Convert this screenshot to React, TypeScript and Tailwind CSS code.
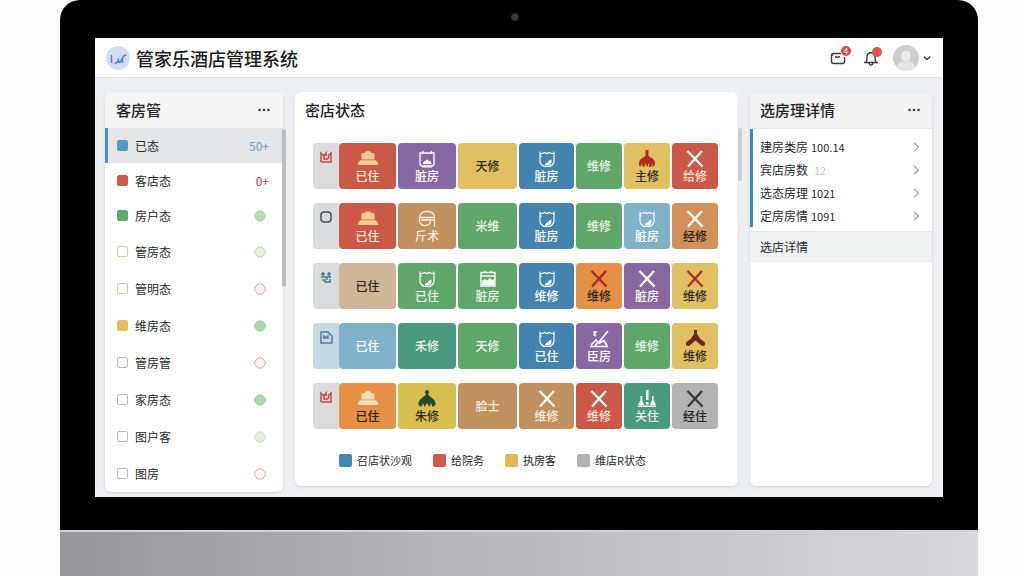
import React, { useState } from 'react';

type IconName = 'bed' | 'cup' | 'box' | 'linen' | 'basket' | 'cross' | 'pump' | 'roof' | 'tree' | 'broom' | 'tools';

interface Tile {
  label: string;
  bg: string;
  text: string;
  icon?: IconName;
  iconColor?: string;
}

interface RoomRow {
  lead: React.ReactNode;
  leadBg: string;
  tiles: Tile[];
}

const icons: Record<IconName, React.ReactNode> = {
  bed: (
    <>
      <path
        fill="currentColor"
        d="M5.500 9.500V4.500Q5.500 3 7 3h1.500Q9.500 1 12 1t3.500 2H17q1.500 0 1.500 1.500v5z"
      />
      <path fill="currentColor" d="M4.500 10.300h15q2.500 1 3 4.700h-21q.5-3.700 3-4.700z" />
    </>
  ),
  cup: (
    <>
      <path fill="none" stroke="currentColor" strokeWidth="1.200" d="M5 1.500V11q0 3 4 5.500h6q4-2.500 4-5.500V1.500M4.500 3.500h3l2-1 2.500 1 2.500-1 2 1h3M5 6h2" />
      <path fill="currentColor" d="M9.500 15.500q1-3 3.500-3.500 1-2 3.500-2.500.5 4-2.500 6z" />
    </>
  ),
  box: (
    <>
      <path fill="none" stroke="currentColor" strokeWidth="1.300" d="M5 3h14v10.500q0 2.500-2.500 2.500h-9Q5 16 5 13.500zM8 1v3M16.500 1v3M7 16.800h10" />
      <path fill="currentColor" d="M8 14q0-3 2.500-3 1.500-3 3.500 0 2.500 0 2.500 3z" />
    </>
  ),
  linen: (
    <path fill="none" stroke="currentColor" strokeWidth="1.300" d="M4.500 8q0-6.500 7.500-6.500T19.500 8v9M4.500 8v3q1 5 6 4.500 5-.5 5-4.500M4.500 7.500h15M6 10h13.500" />
  ),
  basket: (
    <>
      <path fill="none" stroke="currentColor" strokeWidth="1.400" d="M5 2.500h14V16H5zM5 6h14M9 1v2M15 1v2" />
      <path fill="currentColor" d="M6 15V11l3-2 2 1.500L14 8l2 2 2-1v6z" />
    </>
  ),
  cross: <path fill="none" stroke="currentColor" strokeWidth="2.300" d="M4.500 1 19.500 16.500M19 1 5 16.500" />,
  pump: (
    <path
      fill="currentColor"
      d="M10.500 0h3v6l4 2.500q3 2 2.500 6.500l-2.500 2v-4l-1.500 4h-2v-4l-2 4-2-4-.5 4-2-.5-.5-3-1.500 3-1.500-1q-.5-5 2.500-7l4-2.500z"
    />
  ),
  roof: <path fill="currentColor" d="M11 0h3v4l3 4.500 5 4v3l-3 .5-6.500-5.500L6 16l-3-.5v-3l5-4L11 4z" />,
  tree: (
    <path
      fill="currentColor"
      d="M12 0q2 0 2 2t-1.200 2.500l4.200 3.500q4 3 3.500 7L17.500 17l-1.500-4-1.500 4-2.500-4-2.500 4-1.500-4-1.500 4L3.500 15Q3 11 7 8l4.200-3.500Q10 4 10 2t2-2z"
    />
  ),
  broom: (
    <path fill="none" stroke="currentColor" strokeWidth="1.600" d="M21 1 12 12M3 16.500h18M4 15l5-5 3 3.500 5-3 3 5M6 2h3L7 4.500l2 1.500M8 16l2-3" />
  ),
  tools: (
    <path fill="currentColor" d="M11 0h2.500v10H11zM11 12h2.500v2.500H11zM5.500 6h1.600v4l2 5H3l2.500-5zM17 6h1.600v4l2.400 5h-6l2-5zM3 15.500h18V17H3z" />
  ),
};

const TileIcon: React.FC<{ name: IconName; color?: string }> = ({ name, color = 'text-white' }) => (
  <svg viewBox="0 0 24 18" className={`h-[18px] w-6 shrink-0 ${color}`} aria-hidden="true">
    {icons[name]}
  </svg>
);

const RED = 'bg-[#cc5847]';
const PURPLE = 'bg-[#8768a3]';
const YELLOW = 'bg-[#e0c062]';
const BLUE = 'bg-[#4284ae]';
const GREEN = 'bg-[#5fa768]';
const SKY = 'bg-[#7fb1c8]';
const BROWN = 'bg-[#c1905f]';
const ORANGE = 'bg-[#e59045]';
const TEAL = 'bg-[#4a9a80]';

const leadPaths = {
  crown: <path d="M2 12h10V3L9.500 5.500V9M2 12V3l3 3v3h4M5 6l2-3v3" />,
  square: <rect x="2" y="2" width="10" height="10" rx="3" />,
  grid: <path d="M2 4h4M8 4h4M4 2v4M10 2v4M2 7h10M3 10h3v2h5v-3M8 7v3" />,
  file: <path d="M2 2h7l4 4v7H2zM5 9V6l2 2 2-2v3" />,
};

const lead = (shape: keyof typeof leadPaths, color: string) => (
  <svg viewBox="0 0 14 14" className={`size-[14px] ${color}`} fill="none" stroke="currentColor" strokeWidth="1.500" aria-hidden="true">
    {leadPaths[shape]}
  </svg>
);

const rows: RoomRow[] = [
  {
    lead: lead('crown', 'text-[#c0493b]'),
    leadBg: 'bg-[#d9dbdc]',
    tiles: [
      { label: '已住', bg: RED, text: 'text-[#ffe9dc]', icon: 'bed', iconColor: 'text-[#fbcb93]' },
      { label: '脏房', bg: PURPLE, text: 'text-white', icon: 'box' },
      { label: '天修', bg: YELLOW, text: 'text-[#2b2a1c]' },
      { label: '脏房', bg: BLUE, text: 'text-white', icon: 'cup' },
      { label: '维修', bg: GREEN, text: 'text-[#e9f6e6]' },
      { label: '主修', bg: YELLOW, text: 'text-[#2b2a1c]', icon: 'pump', iconColor: 'text-[#b52a20]' },
      { label: '给修', bg: RED, text: 'text-[#ffe1da]', icon: 'cross' },
    ],
  },
  {
    lead: lead('square', 'text-[#4b5054]'),
    leadBg: 'bg-[#d9dbdc]',
    tiles: [
      { label: '已住', bg: RED, text: 'text-[#ffe9dc]', icon: 'bed', iconColor: 'text-[#fbcb93]' },
      { label: '斤术', bg: BROWN, text: 'text-[#fbeedd]', icon: 'linen', iconColor: 'text-[#fbeedd]' },
      { label: '米维', bg: GREEN, text: 'text-[#e9f6e6]' },
      { label: '脏房', bg: BLUE, text: 'text-white', icon: 'cup' },
      { label: '维修', bg: GREEN, text: 'text-[#e9f6e6]' },
      { label: '脏房', bg: SKY, text: 'text-white', icon: 'cup' },
      { label: '经修', bg: 'bg-[#d0925a]', text: 'text-[#2b2118]', icon: 'cross' },
    ],
  },
  {
    lead: lead('grid', 'text-[#3f7f86]'),
    leadBg: 'bg-[#d9dbdc]',
    tiles: [
      { label: '已住', bg: 'bg-[#cdb797]', text: 'text-[#2e261d]' },
      { label: '已住', bg: GREEN, text: 'text-[#e9f6e6]', icon: 'cup' },
      { label: '脏房', bg: GREEN, text: 'text-[#e9f6e6]', icon: 'basket' },
      { label: '维修', bg: BLUE, text: 'text-white', icon: 'cup' },
      { label: '维修', bg: ORANGE, text: 'text-[#2b2118]', icon: 'cross', iconColor: 'text-[#a8261c]' },
      { label: '脏房', bg: PURPLE, text: 'text-white', icon: 'cross' },
      { label: '维修', bg: YELLOW, text: 'text-[#2b2a1c]', icon: 'cross', iconColor: 'text-[#b52a20]' },
    ],
  },
  {
    lead: lead('file', 'text-[#4f7e97]'),
    leadBg: 'bg-[#c5dae5]',
    tiles: [
      { label: '已住', bg: SKY, text: 'text-white' },
      { label: '禾修', bg: TEAL, text: 'text-[#e9f6e6]' },
      { label: '天修', bg: GREEN, text: 'text-[#e9f6e6]' },
      { label: '已住', bg: BLUE, text: 'text-white', icon: 'cup' },
      { label: '臣房', bg: PURPLE, text: 'text-white', icon: 'broom' },
      { label: '维修', bg: GREEN, text: 'text-[#e9f6e6]' },
      { label: '维修', bg: YELLOW, text: 'text-[#2b2a1c]', icon: 'roof', iconColor: 'text-[#6e2417]' },
    ],
  },
  {
    lead: lead('crown', 'text-[#c0493b]'),
    leadBg: 'bg-[#d9dbdc]',
    tiles: [
      { label: '已住', bg: ORANGE, text: 'text-[#2b2118]', icon: 'bed', iconColor: 'text-[#ffdfb5]' },
      { label: '朱修', bg: 'bg-[#d9bf50]', text: 'text-[#2b2a1c]', icon: 'tree', iconColor: 'text-[#1f4a26]' },
      { label: '脸士', bg: BROWN, text: 'text-[#fbeedd]' },
      { label: '维修', bg: BROWN, text: 'text-[#fbeedd]', icon: 'cross' },
      { label: '维修', bg: RED, text: 'text-[#ffe1da]', icon: 'cross' },
      { label: '关住', bg: TEAL, text: 'text-[#e9f6e6]', icon: 'tools' },
      { label: '经住', bg: 'bg-[#b3b3b3]', text: 'text-[#222222]', icon: 'cross', iconColor: 'text-[#33373a]' },
    ],
  },
];

const sideItems = [
  { label: '已态', box: 'bg-[#559ac2] border-[#559ac2]', count: '50+', countColor: 'text-[#5a9fca]' },
  { label: '客店态', box: 'bg-[#d25a49] border-[#d25a49]', count: '0+', countColor: 'text-[#c8372c]' },
  { label: '房户态', box: 'bg-[#5ea869] border-[#5ea869]', dot: 'fill-[#b5dfb4] stroke-[#a3d3a4]' },
  { label: '管房态', box: 'border-[#c5cfa6]', dot: 'fill-[#dff0dd] stroke-[#bcd6bb]' },
  { label: '管明态', box: 'border-[#cdc7ac]', dot: 'fill-[#fbf1f0] stroke-[#d9a3a1]' },
  { label: '维房态', box: 'bg-[#e7bd62] border-[#e7bd62]', dot: 'fill-[#a4dba8] stroke-[#98cf9d]' },
  { label: '管房管', box: 'border-[#b6babd]', dot: 'fill-[#faf0ee] stroke-[#dba9a7]' },
  { label: '家房态', box: 'border-[#b6babd]', dot: 'fill-[#a4dba8] stroke-[#98cf9d]' },
  { label: '图户客', box: 'border-[#b6babd]', dot: 'fill-[#e6f1e4] stroke-[#c5dac4]' },
  { label: '图房', box: 'border-[#b6babd]', dot: 'fill-[#fdf6f6] stroke-[#d9a3a1]' },
];

const details = [
  { label: '建房类房', value: '100.14', muted: false },
  { label: '宾店房数', value: '12', muted: true },
  { label: '选态房理', value: '1021', muted: false },
  { label: '定房房情', value: '1091', muted: false },
];

const legend = [
  { label: '召店状沙观', color: 'bg-[#4389b2]' },
  { label: '给院务', color: 'bg-[#cf5c4a]' },
  { label: '执房客', color: 'bg-[#dcba55]' },
  { label: '维店R状态', color: 'bg-[#b3b3b3]' },
];

const MoreButton: React.FC = () => (
  <button type="button" aria-label="更多" className="flex h-4 w-3 items-center justify-center text-[#2c2f33]">
    <svg viewBox="0 0 12 4" className="h-1 w-3 shrink-0" fill="currentColor">
      <circle cx="1.500" cy="2" r="1.200" />
      <circle cx="6" cy="2" r="1.200" />
      <circle cx="10.500" cy="2" r="1.200" />
    </svg>
  </button>
);

const Header: React.FC = () => (
  <header className="flex h-10 items-center border-b border-[#e2e3e6] bg-white pr-3 pl-[11px]">
    <svg viewBox="0 0 24 24" className="size-6 shrink-0" aria-hidden="true">
      <circle cx="12" cy="12" r="12" fill="#d3def6" />
      <path d="M5.500 9v8M8.500 17.500q4-.5 4-5M12.500 17v-3.500M13.500 17l3-5M16.500 17v-4q0-3.500 4-4" fill="none" stroke="#4a80e4" strokeWidth="1.500" />
    </svg>
    <h1 className="ml-[6px] text-[18px] leading-6 font-medium text-[#1b1d20]">管家乐酒店管理系统</h1>

    <div className="ml-auto flex items-center">
      <button type="button" aria-label="消息" className="relative text-[#3a3e42]">
        <svg viewBox="0 0 16 16" className="size-4" fill="none" stroke="currentColor" strokeWidth="1.400">
          <path d="M11 3.500H3.500Q1.500 3.500 1.500 5.500v6q0 2 2 2h9q2 0 2-2V7M1.500 6 3 4M5 6.500l2.500 1L10 6.500" />
        </svg>
        <span className="absolute -top-1 -right-[5px] size-[10px] rounded-full bg-[#e2463f] text-center text-[8px] leading-[10px] text-white">4</span>
      </button>
      <button type="button" aria-label="通知" className="relative ml-[17px] text-[#3a3e42]">
        <svg viewBox="0 0 16 16" className="size-4" fill="none" stroke="currentColor" strokeWidth="1.400">
          <path d="M1 12.500h14M3 12q1-1.500 1-5 0-4 4-4.500 4 .5 4 4.500 0 3.500 1 5M6 13q.5 2.300 2 2.300t2-2.300" />
        </svg>
        <span className="absolute -top-[3px] -right-[3px] size-[10px] rounded-full bg-[#e8524b]" />
      </button>
      <button type="button" aria-label="用户菜单" className="ml-[14px] flex items-center gap-1 text-[#3a3e42]">
        <svg viewBox="0 0 26 26" className="size-[26px]">
          <circle cx="13" cy="13" r="13" fill="#cdcdce" />
          <path d="M4 22q1-6 9-6t9 6q-4 4-9 4t-9-4z" fill="#e4e4e5" />
          <rect x="8.500" y="6" width="9" height="10" rx="4" fill="#ebebec" />
        </svg>
        <svg viewBox="0 0 8 8" className="size-2" fill="none" stroke="currentColor" strokeWidth="1.500">
          <path d="m.8 2.500 3.200 3 3.200-3" />
        </svg>
      </button>
    </div>
  </header>
);

const Sidebar: React.FC = () => {
  const [active, setActive] = useState(0);

  return (
    <aside className="relative w-[178px] shrink-0 rounded-md bg-white shadow-sm">
      <div className="flex h-9 items-center justify-between rounded-t-md bg-[#f5f5f5] pr-[13px] pl-[11px]">
        <h2 className="text-[15px] leading-5 font-medium text-[#1f2124]">客房管</h2>
        <MoreButton />
      </div>
      <ul>
        {sideItems.map((item, i) => (
          <li key={item.label}>
            <label
              className={`flex items-center border-l-3 pr-[14px] pl-[9px] text-[12px] leading-4 text-[#26292c] ${i < 3 ? 'h-[35px]' : 'h-[37px]'} ${
                i === active ? 'border-[#4a90c0] bg-[#e5e6e7]' : 'border-transparent'
              }`}
            >
              <input
                type="checkbox"
                onChange={() => setActive(i)}
                className={`mr-[7px] size-[11px] appearance-none rounded-xs border ${item.box}`}
              />
              {item.label}
              {item.count && <span className={`ml-auto ${item.countColor}`}>{item.count}</span>}
              {item.dot && (
                <svg viewBox="0 0 12 12" className={`mr-[3px] ml-auto size-3 ${item.dot}`} strokeLinejoin="round">
                  <path d="M4.500 1h3Q9 1.300 11.300 4.800v2.400Q9 10.700 7.500 11h-3Q3 10.700.7 7.200V4.800Q3 1.300 4.500 1z" />
                </svg>
              )}
            </label>
          </li>
        ))}
      </ul>
      <div className="absolute top-[37px] -right-[3px] h-[158px] w-1 rounded-full bg-[#bcbebf]" />
    </aside>
  );
};

const TileButton: React.FC<{ tile: Tile }> = ({ tile }) => (
  <button
    type="button"
    className={`flex h-[46px] min-w-0 flex-1 flex-col items-center justify-center gap-px rounded-sm text-[12px] leading-[14px] font-medium ${tile.bg} ${tile.text}`}
  >
    {tile.icon && <TileIcon name={tile.icon} color={tile.iconColor} />}
    {tile.label}
  </button>
);

const RoomBoard: React.FC = () => (
  <main className="relative mb-[6px] min-w-0 flex-1 rounded-md bg-white shadow-sm">
    <h2 className="flex h-9 items-center px-[10px] text-[15px] leading-5 font-medium text-[#1f2124]">密店状态</h2>
    <div className="mt-[15px] flex flex-col gap-[14px] pr-5 pl-[18px]">
      {rows.map((row, i) => (
        <div key={i} className="grid grid-cols-[83fr_58fr_59fr_55fr_46fr_46fr_46fr] gap-[2px]">
          <div className="flex">
            <div className={`flex w-[26px] shrink-0 justify-center rounded-l-sm pt-[7px] ${row.leadBg}`}>{row.lead}</div>
            <TileButton tile={row.tiles[0]} />
          </div>
          {row.tiles.slice(1).map((tile, j) => (
            <TileButton key={j} tile={tile} />
          ))}
        </div>
      ))}
    </div>
    <ul className="mt-[22px] flex gap-[21px] pl-11">
      {legend.map((item) => (
        <li key={item.label} className="flex items-center gap-[5px] text-[11px] leading-[18px] text-[#26292c]">
          <span className={`size-[13px] rounded-xs ${item.color}`} />
          {item.label}
        </li>
      ))}
    </ul>
    <div className="absolute top-9 -right-1 h-[53px] w-1 rounded-full bg-[#cfcfcd]" />
  </main>
);

const DetailPanel: React.FC = () => (
  <aside className="mb-[6px] w-[182px] shrink-0 rounded-md bg-white shadow-sm">
    <div className="flex h-[37px] items-center justify-between rounded-t-md border-b border-[#e6e7e8] bg-[#f3f3f4] pr-3 pl-[10px]">
      <h2 className="text-[15px] leading-5 font-medium text-[#1f2124]">选房理详情</h2>
      <MoreButton />
    </div>
    <ul className="border-l-3 border-[#3f86c6] pt-[6px]">
      {details.map((d) => (
        <li key={d.label}>
          <button type="button" className="flex h-[23px] w-full items-center pr-3 pl-[7px] text-[12px] leading-4 text-[#26292c]">
            {d.label}
            <span className={`text-[11px] ${d.muted ? 'ml-[6px] text-[#c4c6c8]' : 'ml-[3px]'}`}>{d.value}</span>
            <svg viewBox="0 0 8 10" className="ml-auto h-[10px] w-2" fill="none" stroke="#a3a6a9" strokeWidth="1.200">
              <path d="m2 .8 4.500 4.200L2 9.200" />
            </svg>
          </button>
        </li>
      ))}
    </ul>
    <h3 className="mt-[4px] flex h-[31px] items-center border-y border-[#e6e7e8] bg-[#f1f2f2] px-[10px] text-[12px] leading-4 text-[#26292c]">
      选店详情
    </h3>
  </aside>
);

const App: React.FC = () => (
  <div className="flex min-h-screen flex-col bg-[#fdfdfd] pr-[46px] pl-[60px] font-['Noto_Sans_CJK_SC',sans-serif]">
    <div className="rounded-t-[20px] bg-black px-[35px] pb-[33px]">
      <div className="flex h-[38px] justify-center pt-[13px] pr-2">
        <span className="size-2 rounded-full border border-[#2c2c2e] bg-[#3a3a3d]" />
      </div>
      <div className="bg-[#eeeff3]">
        <Header />
        <div className="flex gap-3 pt-[14px] pr-[11px] pb-[5px] pl-[10px]">
          <Sidebar />
          <RoomBoard />
          <DetailPanel />
        </div>
      </div>
    </div>
    {/* aluminium chin of the monitor */}
    <div className="flex-1 border-t-2 border-[#d2d4d4] bg-linear-to-r from-[#97979a] via-[#bababe] to-[#d9d9dc]" />
  </div>
);

export default App;
